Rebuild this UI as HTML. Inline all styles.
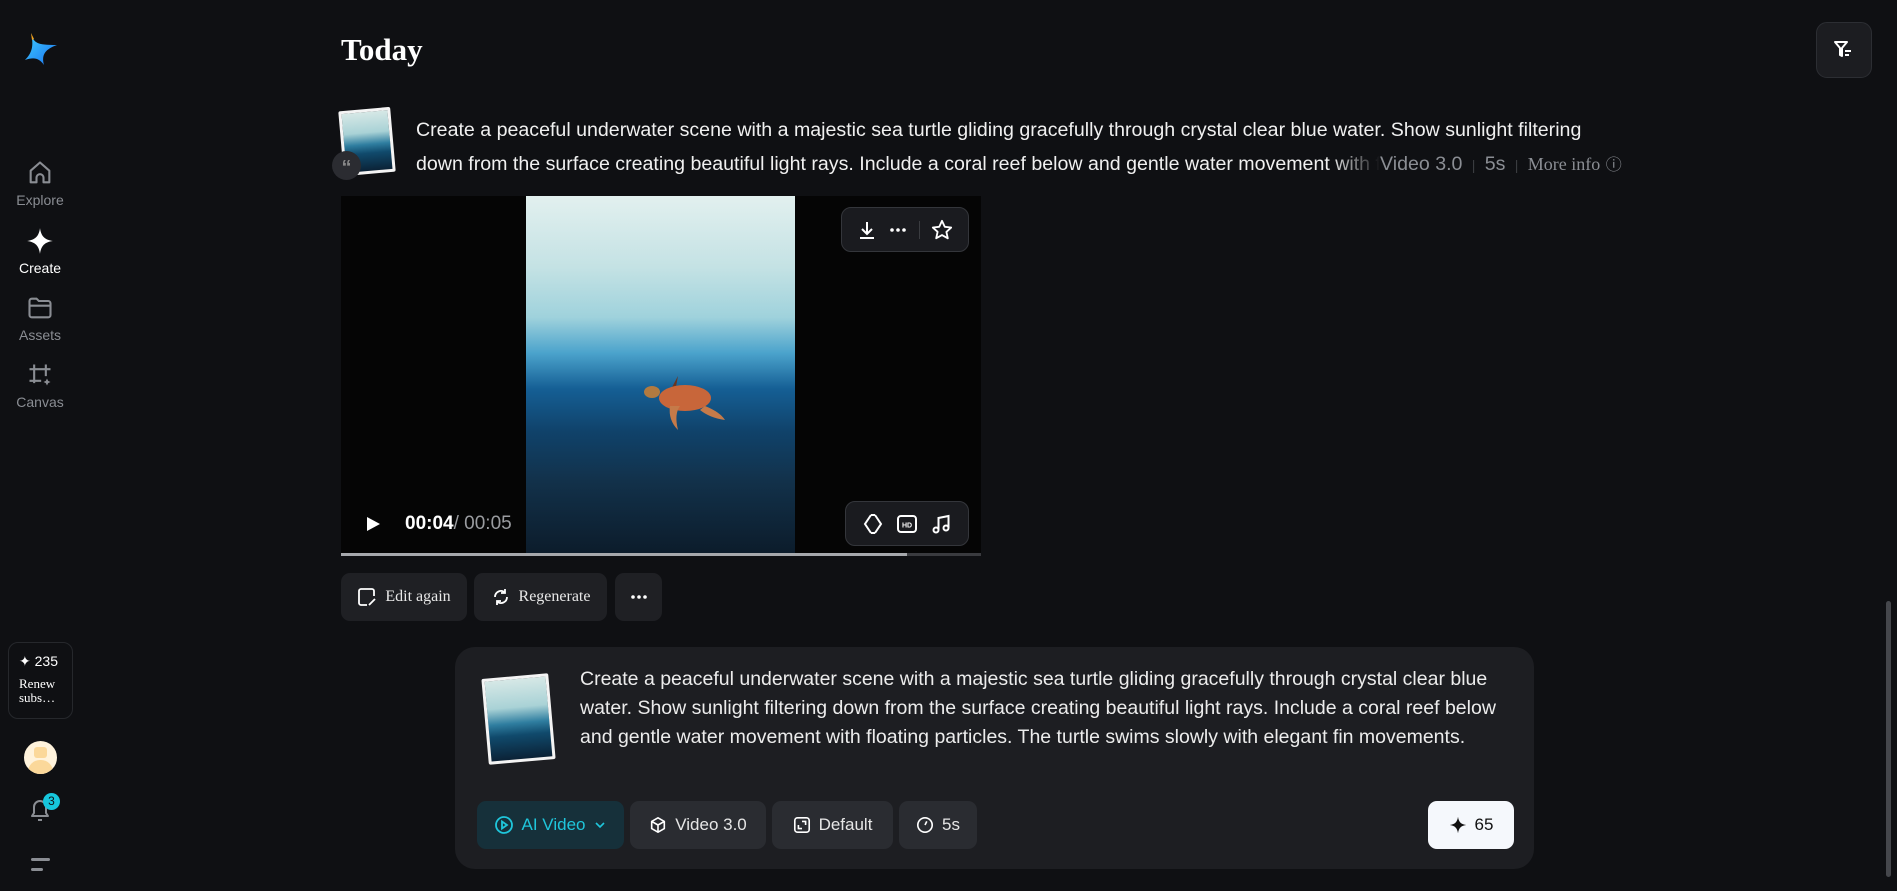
<!DOCTYPE html>
<html><head><meta charset="utf-8"><style>
*{margin:0;padding:0;box-sizing:border-box}
body{width:1897px;height:891px;background:#0f1013;color:#fff;font-family:"Liberation Sans",sans-serif;position:relative;overflow:hidden}
.abs{position:absolute}
.nav{position:absolute;left:0;width:80px;text-align:center;font-size:14px;color:#8a8d93}
.nav svg{display:block;margin:0 auto}
.btn{position:absolute;background:#1f2024;border-radius:9px;display:flex;align-items:center;justify-content:center;gap:8px;font-family:"Liberation Serif",serif;font-size:16px;color:#e8e8e8}
.chip{position:absolute;top:801px;height:48px;background:#2a2c31;border-radius:9px;display:flex;align-items:center;justify-content:center;gap:8px;font-size:17px;color:#e6e6e6}
.tb{position:absolute;background:#1a1b1f;border:1px solid #34363b;border-radius:10px;display:flex;align-items:center;justify-content:space-around;padding:0 10px}
.thumb{position:absolute;background:linear-gradient(#d6e8e6 0%,#a9d2d6 35%,#2f7ea0 55%,#104a6c 70%,#0b2236 100%);border:3px solid #f4f4f4;border-radius:2px}
</style></head><body>

<svg class="abs" style="left:24px;top:31px" width="36" height="36" viewBox="0 0 36 36">
<defs><linearGradient id="lg" x1="0" y1="0" x2="1" y2="1"><stop offset="0" stop-color="#3fd0ff"/><stop offset="1" stop-color="#1a6ff0"/></linearGradient></defs>
<path d="M7 2 C10 12 12 14 33 14 C22 18 17 23 20 34 C15 27 10 26 1 29 C8 22 10 15 7 2Z" fill="url(#lg)"/>
<path d="M7 2 L10 8 L8 9Z" fill="#f5a21b"/>
</svg>

<div class="nav" style="top:159px"><svg width="28" height="28" viewBox="0 0 24 24" fill="none" stroke="#8a8d93" stroke-width="1.8"><path d="M4 20V10l8-7 8 7v10h-5v-4a3 3 0 0 0-6 0v4Z" stroke-linejoin="round"/></svg><div style="margin-top:5px">Explore</div></div>
<div class="nav" style="top:227px;color:#fff"><svg width="28" height="28" viewBox="0 0 24 24"><path d="M12 1C13 8 16 11 23 12C16 13 13 16 12 23C11 16 8 13 1 12C8 11 11 8 12 1Z" fill="#fff"/></svg><div style="margin-top:5px">Create</div></div>
<div class="nav" style="top:294px"><svg width="28" height="28" viewBox="0 0 24 24" fill="none" stroke="#8a8d93" stroke-width="1.8"><path d="M3 6a2 2 0 0 1 2-2h4l2 2h8a2 2 0 0 1 2 2v10a2 2 0 0 1-2 2H5a2 2 0 0 1-2-2Z M3 10h18"/></svg><div style="margin-top:5px">Assets</div></div>
<div class="nav" style="top:361px"><svg width="28" height="28" viewBox="0 0 24 24" fill="none" stroke="#8a8d93" stroke-width="1.8"><path d="M7 3v16M17 3v10M3 7h18M3 17h10"/><path d="M18 15l1 2 2 1-2 1-1 2-1-2-2-1 2-1Z" fill="#8a8d93" stroke="none"/></svg><div style="margin-top:5px">Canvas</div></div>

<div class="abs" style="left:8px;top:642px;width:65px;height:77px;border:1px solid #26282c;border-radius:10px;padding:10px 0 0 10px">
<div style="font-size:14px">✦ 235</div>
<div style="font-family:'Liberation Serif',serif;font-size:13px;line-height:14px;margin-top:7px">Renew<br>subs…</div></div>
<div class="abs" style="left:24px;top:741px;width:33px;height:33px;border-radius:50%;background:#fff3dc;overflow:hidden"><div style="position:absolute;left:10px;top:6px;width:13px;height:11px;background:#fbd89a;border-radius:3px"></div><div style="position:absolute;left:4px;top:19px;width:25px;height:16px;background:#fbd89a;border-radius:12px 12px 0 0"></div></div>
<svg class="abs" style="left:28px;top:797px" width="24" height="26" viewBox="0 0 24 26" fill="none" stroke="#8a8d93" stroke-width="2"><path d="M4 19h16l-2-3v-6a6 6 0 0 0-12 0v6Z M10 23h4" stroke-linejoin="round"/></svg>
<div class="abs" style="left:43px;top:793px;width:17px;height:17px;border-radius:50%;background:#16c6dc;color:#0f1013;font-size:12px;text-align:center;line-height:17px">3</div>
<div class="abs" style="left:31px;top:858px;width:19px;height:3px;background:#8a8d93;border-radius:2px"></div>
<div class="abs" style="left:31px;top:868px;width:12px;height:3px;background:#8a8d93;border-radius:2px"></div>

<div class="abs" style="left:341px;top:32px;font-family:'Liberation Serif',serif;font-weight:bold;font-size:31px">Today</div>
<div class="abs" style="left:1816px;top:22px;width:56px;height:56px;background:#1c1d21;border:1px solid #2c2e33;border-radius:11px"></div>
<svg class="abs" style="left:1832px;top:38px" width="24" height="24" viewBox="0 0 24 24" fill="none" stroke="#fff" stroke-width="2" stroke-linejoin="round"><path d="M3 4h12l-5 6v8l-2-1v-7Z"/><path d="M13 13h6M13 17h4"/></svg>

<div class="thumb" style="left:341px;top:109px;width:52px;height:65px;transform:rotate(-5deg)"></div>
<div class="abs" style="left:332px;top:151px;width:29px;height:29px;border-radius:50%;background:#2b2c31;color:#888;font-size:20px;font-weight:bold;text-align:center;line-height:34px">“</div>
<div class="abs" style="left:416px;top:113px;font-size:19.6px;line-height:34px;color:#f0f0f0;width:1300px;white-space:nowrap">Create a peaceful underwater scene with a majestic sea turtle gliding gracefully through crystal clear blue water. Show sunlight filtering<br>down from the surface creating beautiful light rays. Include a coral reef below and gentle water movement with floating</div>
<div class="abs" style="left:1330px;top:149px;width:50px;height:34px;background:linear-gradient(90deg,rgba(15,16,19,0),#0f1013)"></div>
<div class="abs" style="left:1380px;top:147px;font-size:19.6px;line-height:34px;color:#8b8e94;white-space:nowrap;background:#0f1013;width:400px">Video 3.0 <span style="color:#3a3c40;font-size:14px">&nbsp;|&nbsp;</span> 5s <span style="color:#3a3c40;font-size:14px">&nbsp;|&nbsp;</span> <span style="font-family:'Liberation Serif',serif;font-size:18px">More info</span> <span style="font-size:16px">ⓘ</span></div>

<div class="abs" style="left:341px;top:196px;width:640px;height:357px;background:#050505"></div>
<div class="abs" style="left:526px;top:196px;width:269px;height:357px;background:linear-gradient(#e2f0ef 0%,#c4e2e4 20%,#9fd2dc 34%,#4ba3cc 44%,#155f95 54%,#10426a 66%,#12314a 80%,#0c1c2b 100%)"></div>
<svg class="abs" style="left:630px;top:368px" width="120" height="70" viewBox="0 0 120 70"><path d="M48 8 L45 24 L40 23Z" fill="#6a3520"/><ellipse cx="55" cy="30" rx="26" ry="13" fill="#c8663a"/><ellipse cx="22" cy="24" rx="8" ry="6" fill="#b27a40"/><path d="M40 38 Q38 52 48 62 Q44 46 50 38Z" fill="#c57a49"/><path d="M75 38 Q90 44 95 52 Q80 50 70 42Z" fill="#c57a49"/></svg>
<div class="abs" style="left:341px;top:553px;width:640px;height:3px;background:#3a3b3f"></div>
<div class="abs" style="left:341px;top:553px;width:566px;height:3px;background:#a6a8ac"></div>
<svg class="abs" style="left:364px;top:515px" width="18" height="18" viewBox="0 0 18 18"><path d="M3 2 L16 9 L3 16Z" fill="#fff"/></svg>
<div class="abs" style="left:405px;top:513px;font-size:19px;font-weight:bold;color:#fff">00:04<span style="color:#9a9ca0;font-weight:normal">/ 00:05</span></div>

<div class="tb" style="left:841px;top:207px;width:128px;height:45px">
<svg width="20" height="20" viewBox="0 0 20 20" fill="none" stroke="#fff" stroke-width="2"><path d="M10 2v11M5 9l5 5 5-5M3 18h14"/></svg>
<svg width="20" height="20" viewBox="0 0 20 20"><circle cx="4" cy="10" r="1.8" fill="#fff"/><circle cx="10" cy="10" r="1.8" fill="#fff"/><circle cx="16" cy="10" r="1.8" fill="#fff"/></svg>
<div style="width:1px;height:18px;background:#3a3c40"></div>
<svg width="22" height="22" viewBox="0 0 24 24" fill="none" stroke="#fff" stroke-width="2" stroke-linejoin="round"><path d="M12 2l3 6.5 7 .8-5.2 4.8 1.5 7L12 17.5 5.7 21l1.5-7L2 9.3l7-.8Z"/></svg></div>
<div class="tb" style="left:845px;top:501px;width:124px;height:45px">
<svg width="22" height="22" viewBox="0 0 22 22" fill="none" stroke="#fff" stroke-width="2"><path d="M9 2 L3 11 L9 20 M13 2 L19 11 L13 20 M9 2 L13 2 M9 20 L13 20"/></svg>
<svg width="22" height="22" viewBox="0 0 22 22" fill="none" stroke="#fff" stroke-width="2"><rect x="2" y="3" width="18" height="16" rx="3"/><text x="11" y="14.5" font-size="7" font-family="Liberation Sans" font-weight="bold" fill="#fff" stroke="none" text-anchor="middle">HD</text></svg>
<svg width="22" height="22" viewBox="0 0 22 22" fill="none" stroke="#fff" stroke-width="2"><circle cx="6" cy="17" r="2.5"/><circle cx="16" cy="15" r="2.5"/><path d="M8.5 17V5l10-2v12"/></svg></div>

<div class="btn" style="left:341px;top:573px;width:126px;height:48px"><svg width="20" height="20" viewBox="0 0 20 20" fill="none" stroke="#fff" stroke-width="1.8"><path d="M17 9V4a2 2 0 0 0-2-2H4a2 2 0 0 0-2 2v12a2 2 0 0 0 2 2h6"/><path d="M12 18l6-6"/></svg>Edit again</div>
<div class="btn" style="left:474px;top:573px;width:133px;height:48px"><svg width="20" height="20" viewBox="0 0 20 20" fill="none" stroke="#fff" stroke-width="1.8"><path d="M4 10a6 6 0 0 1 10-4.5M16 10a6 6 0 0 1-10 4.5M14 2v4h-4M6 18v-4h4"/></svg>Regenerate</div>
<div class="btn" style="left:615px;top:573px;width:47px;height:48px"><svg width="20" height="20" viewBox="0 0 20 20"><circle cx="4" cy="10" r="1.8" fill="#fff"/><circle cx="10" cy="10" r="1.8" fill="#fff"/><circle cx="16" cy="10" r="1.8" fill="#fff"/></svg></div>

<div class="abs" style="left:455px;top:647px;width:1079px;height:222px;background:#1d1e22;border-radius:20px"></div>
<div class="thumb" style="left:485px;top:676px;width:67px;height:86px;transform:rotate(-5deg)"></div>
<div class="abs" style="left:580px;top:665px;width:930px;font-size:19.5px;line-height:29px;color:#ececec">Create a peaceful underwater scene with a majestic sea turtle gliding gracefully through crystal clear blue water. Show sunlight filtering down from the surface creating beautiful light rays. Include a coral reef below and gentle water movement with floating particles. The turtle swims slowly with elegant fin movements.</div>
<div class="chip" style="left:477px;width:147px;background:#16303a;color:#1fc6db"><svg width="20" height="20" viewBox="0 0 20 20" fill="none" stroke="#1fc6db" stroke-width="1.8"><circle cx="10" cy="10" r="8"/><path d="M8 6.5l5 3.5-5 3.5Z"/></svg>AI Video <svg width="14" height="14" viewBox="0 0 14 14" fill="none" stroke="#1fc6db" stroke-width="1.6"><path d="M3 5l4 4 4-4"/></svg></div>
<div class="chip" style="left:630px;width:136px"><svg width="18" height="18" viewBox="0 0 20 20" fill="none" stroke="#fff" stroke-width="1.8" stroke-linejoin="round"><path d="M10 2l7 4v8l-7 4-7-4V6Z M3 6l7 4 7-4M10 10v8"/></svg>Video 3.0</div>
<div class="chip" style="left:772px;width:121px"><svg width="18" height="18" viewBox="0 0 20 20" fill="none" stroke="#fff" stroke-width="1.8"><rect x="2" y="2" width="16" height="16" rx="3"/><path d="M6 10v4h4M14 10V6h-4"/></svg>Default</div>
<div class="chip" style="left:899px;width:78px"><svg width="18" height="18" viewBox="0 0 20 20" fill="none" stroke="#fff" stroke-width="1.8"><circle cx="10" cy="10" r="8"/><path d="M10 10l2-4"/></svg>5s</div>
<div class="chip" style="left:1428px;width:86px;background:#f5f8fc;color:#111"><svg width="18" height="18" viewBox="0 0 24 24"><path d="M12 1C13 8 16 11 23 12C16 13 13 16 12 23C11 16 8 13 1 12C8 11 11 8 12 1Z" fill="#111"/></svg>65</div>

<div class="abs" style="left:1886px;top:601px;width:5px;height:276px;background:#45474c;border-radius:3px"></div>
</body></html>
